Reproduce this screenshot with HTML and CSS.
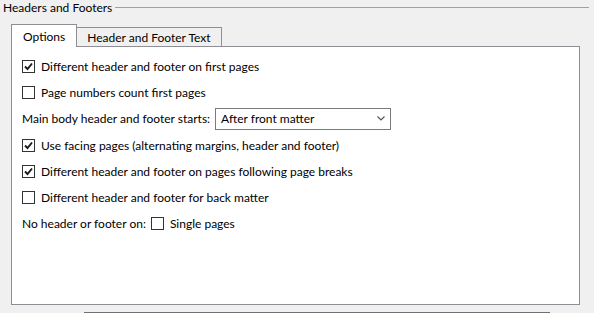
FILE: index.html
```html
<!DOCTYPE html>
<html lang="en">
<head>
    <meta charset="UTF-8">
    <title>Headers and Footers</title>
    <link rel="stylesheet" href="styles.css">
</head>
<body>
    <div class="group-title">
        <span>Headers and Footers</span>
        <div class="rule"></div>
    </div>

    <div class="tabs">
        <div class="tab active">Options</div>
        <div class="tab">Header and Footer Text</div>
    </div>

    <div class="panel">
        <div class="row">
            <span class="check on"><svg viewBox="0 0 11 11" width="11" height="11"><path d="M2 5.5 L4.5 8 L9 2.5" fill="none" stroke="#1a1a1a" stroke-width="1.9"/></svg></span>
            Different header and footer on first pages
        </div>
        <div class="row">
            <span class="check"></span>
            Page numbers count first pages
        </div>
        <div class="row tall">
            <span class="label">Main body header and footer starts:</span>
            <div class="select">
                <span>After front matter</span>
                <svg viewBox="0 0 8 5" width="8" height="5"><path d="M0.5 0.5 L4 4 L7.5 0.5" fill="none" stroke="#555" stroke-width="1.2"/></svg>
            </div>
        </div>
        <div class="row">
            <span class="check on"><svg viewBox="0 0 11 11" width="11" height="11"><path d="M2 5.5 L4.5 8 L9 2.5" fill="none" stroke="#1a1a1a" stroke-width="1.9"/></svg></span>
            Use facing pages (alternating margins, header and footer)
        </div>
        <div class="row">
            <span class="check on"><svg viewBox="0 0 11 11" width="11" height="11"><path d="M2 5.5 L4.5 8 L9 2.5" fill="none" stroke="#1a1a1a" stroke-width="1.9"/></svg></span>
            Different header and footer on pages following page breaks
        </div>
        <div class="row">
            <span class="check"></span>
            Different header and footer for back matter
        </div>
        <div class="row">
            <span class="label">No header or footer on:</span>
            <span class="check"></span>
            Single pages
        </div>
    </div>

    <div class="bottom-line"></div>
</body>
</html>
```

FILE: styles.css
```css
body {
    margin: 0;
    background-color: #f0f0f0;
    font-family: Lato, "Noto Sans", sans-serif;
    font-size: 12px;
    color: #000;
    width: 594px;
    height: 313px;
    overflow: hidden;
}
.group-title {
    display: flex;
    align-items: center;
    height: 15px;
    padding-left: 3px;
    padding-right: 5px;
}
.group-title span {
    white-space: nowrap;
    margin-right: 3px;
}
.rule {
    flex: 1;
    height: 0;
    border-top: 1px solid #a0a0a0;
}
.tabs {
    display: flex;
    align-items: flex-end;
    margin-left: 11px;
    margin-top: 9px;
    height: 22px;
}
.tab {
    box-sizing: border-box;
    height: 19px;
    padding: 0 10px;
    border: 1px solid #8e8f94;
    border-bottom: none;
    border-left: none;
    background-color: #f0f0f0;
    display: flex;
    align-items: center;
    white-space: nowrap;
}
.tab.active {
    height: 23px;
    margin-bottom: -1px;
    border-left: 1px solid #8e8f94;
    background: white;
    padding: 0 11px;
    position: relative;
    z-index: 1;
}
.panel {
    box-sizing: border-box;
    margin-left: 11px;
    width: 569px;
    height: 259px;
    background: white;
    border: 1px solid #8e8f94;
    padding: 6px 0 0 10px;
}
.row {
    display: flex;
    align-items: center;
    height: 26px;
    white-space: nowrap;
}
.row.tall {
    height: 27px;
}
.check {
    box-sizing: border-box;
    width: 13px;
    height: 13px;
    border: 1px solid #333;
    background: white;
    margin-right: 6px;
    display: flex;
    align-items: center;
    justify-content: center;
}
.label {
    margin-right: 5px;
}
.select {
    box-sizing: border-box;
    width: 176px;
    height: 22px;
    border: 1px solid #7a7a7a;
    display: flex;
    align-items: center;
    justify-content: space-between;
    padding: 0 5px 0 5px;
}
.bottom-line {
    margin-left: 84px;
    margin-top: 7px;
    width: 466px;
    height: 1px;
    background-color: #707070;
}
```
